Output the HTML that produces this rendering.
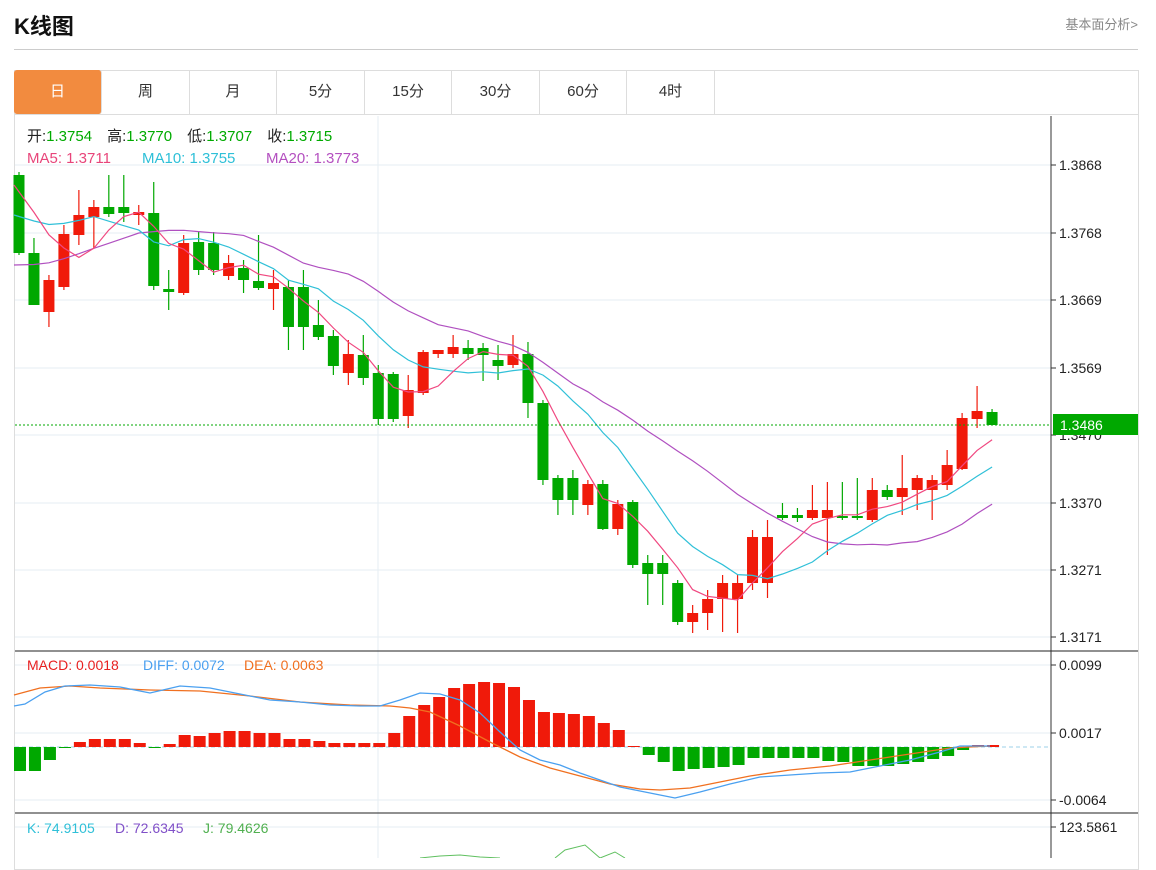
<!DOCTYPE html>
<html><head><meta charset="utf-8"><style>
*{margin:0;padding:0;box-sizing:border-box}
body{width:1156px;height:858px;overflow:hidden;background:#fff;font-family:"Liberation Sans","Noto Sans CJK SC",sans-serif;position:relative}
.t{position:absolute;left:14px;top:9px;font-size:22px;font-weight:bold;color:#111}
.r{position:absolute;right:18px;top:14px;font-size:13px;color:#888}
.hl{position:absolute;left:14px;top:49px;width:1124px;height:1px;background:#ccc}
.frame{position:absolute;left:14px;top:70px;width:1125px;height:800px;border:1px solid #ddd}
.tabs{position:absolute;left:14px;top:70px;height:45px;width:1125px;border-bottom:1px solid #ddd}
.tab{position:absolute;top:0;height:44px;line-height:44px;text-align:center;font-size:15px;color:#333;border-right:1px solid #ddd}
.tab.a{background:#f28b3f;color:#fff;border-radius:3px}
svg{position:absolute;left:0;top:0}
</style></head><body>
<div class="t">K线图</div><div class="r">基本面分析&gt;</div><div class="hl"></div>
<div class="frame"></div>
<div class="tabs">
<div class="tab a" style="left:0;width:88px">日</div>
<div class="tab" style="left:88px;width:88px">周</div>
<div class="tab" style="left:176px;width:87px">月</div>
<div class="tab" style="left:263px;width:88px">5分</div>
<div class="tab" style="left:351px;width:87px">15分</div>
<div class="tab" style="left:438px;width:88px">30分</div>
<div class="tab" style="left:526px;width:87px">60分</div>
<div class="tab" style="left:613px;width:88px">4时</div>
</div>
<svg id="s" width="1156" height="858" font-family="Liberation Sans, Noto Sans CJK SC, sans-serif"></svg>
<script>
var s=document.getElementById('s'),h='';
function L(x1,y1,x2,y2,c,w,d){h+='<line x1="'+x1+'" y1="'+y1+'" x2="'+x2+'" y2="'+y2+'" stroke="'+c+'" stroke-width="'+(w||1)+'"'+(d?' stroke-dasharray="'+d+'"':'')+'/>';}
function T(x,y,t,c,sz){h+='<text x="'+x+'" y="'+y+'" fill="'+c+'" font-size="'+(sz||14)+'">'+t+'</text>';}
function X(i){return 19+i*14.97;}
[165,233,300,368,435,503,570,637,665,733,800,827].forEach(function(y){L(15,y,1051,y,'#e6edf3',1)});
L(378,116,378,858,'#e6edf3',1);
L(1051,116,1051,858,'#333',1);
L(15,651,1138,651,'#222',1);L(15,813,1138,813,'#222',1);
[['1.3868',165],['1.3768',233],['1.3669',300],['1.3569',368],['1.3470',435],['1.3370',503],['1.3271',570],['1.3171',637],['0.0099',665],['0.0017',733],['-0.0064',800],['123.5861',827]].forEach(function(a){L(1051,a[1],1056,a[1],'#333');T(1059,a[1]+5,a[0],'#222',14)});
var C=[[175,253,172,255,0],[253,305,238,305,0],[280,312,275,327,1],[234,287,225,290,1],[215,235,190,245,1],[207,217,200,248,1],[207,214,175,217,0],[207,213,175,222,0],[212,215,205,225,1],[213,286,182,290,0],[289,292,270,310,0],[243,293,235,295,1],[242,270,232,275,0],[243,270,232,275,0],[263,276,255,280,1],[268,280,260,293,0],[281,288,235,290,0],[283,289,270,310,1],[287,327,280,350,0],[287,327,270,350,0],[325,337,300,340,0],[336,366,330,375,0],[354,373,340,385,1],[355,378,335,385,0],[373,419,365,425,0],[374,419,372,422,0],[390,416,375,428,1],[352,393,350,395,1],[350,354,350,358,1],[347,354,335,358,1],[348,354,340,360,0],[348,355,343,381,0],[360,366,345,380,0],[354,365,335,368,1],[354,403,342,418,0],[403,480,400,485,0],[478,500,475,515,0],[478,500,470,515,0],[484,505,480,515,1],[484,529,480,530,0],[504,529,500,535,1],[502,565,500,568,0],[563,574,555,605,0],[563,574,555,605,0],[583,622,580,625,0],[613,622,605,633,1],[599,613,590,630,1],[583,599,575,632,1],[583,599,575,633,1],[537,583,530,590,1],[537,583,520,598,1],[515,518,503,520,0],[515,518,508,522,0],[510,518,485,520,1],[510,518,482,555,1],[516,518,482,520,0],[516,518,478,520,0],[490,520,478,522,1],[490,497,485,500,0],[488,497,455,515,1],[478,490,475,510,1],[480,490,475,520,1],[465,485,450,490,1],[418,469,413,470,1],[411,419,386,428,1],[412,425,409,425,0]];
var cl=[];
C.forEach(function(c,i){var x=X(i),col=c[4]?'#f01a0a':'#00a800';L(x,c[2],x,c[3],col,1.2);h+='<rect x="'+(x-5.5)+'" y="'+c[0]+'" width="11" height="'+Math.max(1.5,c[1]-c[0])+'" fill="'+col+'"/>';cl.push(c[4]?c[0]:c[1]);});
var seeds=[315,315,315,315,315,315,315,315,315,315,245,245,245,245,245,168,168,168,168];
var clx=seeds.concat(cl),off=19;
function ma2(n,col){var p=[];for(var i=off;i<clx.length;i++){var sm=0;for(var j=i-n+1;j<=i;j++)sm+=clx[j];var x=X(i-off);if(i==off)x=14;p.push(x.toFixed(1)+','+(sm/n).toFixed(1));}h+='<polyline points="'+p.join(' ')+'" fill="none" stroke="'+col+'" stroke-width="1.2"/>';}
ma2(20,'#b050c0');ma2(10,'#30c0d8');ma2(5,'#f04880');
L(15,425,1051,425,'#00a800',1,'2,2');
h+='<rect x="1053" y="414" width="85" height="21" fill="#00a800"/>';T(1060,430,'1.3486','#fff',14);
T(27,141,'开:<tspan fill="#0a0">1.3754</tspan>　高:<tspan fill="#0a0">1.3770</tspan>　低:<tspan fill="#0a0">1.3707</tspan>　收:<tspan fill="#0a0">1.3715</tspan>','#222',15);
T(27,163,'MA5: 1.3711','#e8457a',15);T(142,163,'MA10: 1.3755','#2ec0d8',15);T(266,163,'MA20: 1.3773','#b450c0',15);
L(15,747,1051,747,'#9dd0e8',1,'4,3');
var M=[771,771,760,-748,742,739,739,739,743,-748,744,735,736,733,731,731,733,733,739,739,741,743,743,743,743,733,716,705,697,688,684,682,683,687,700,712,713,714,716,723,730,746,755,762,771,769,768,767,765,758,758,758,758,758,761,762,766,766,766,764,762,759,756,750,745,745];
M.forEach(function(v,i){var x=X(i)-5,col,y,hh;if(i<3||(i>=42&&i<64)){col='#00a800';y=747;hh=v-747;}else if(v<0){col='#00a800';y=747;hh=-v-747;}else{col='#f01a0a';y=v;hh=747-v;}h+='<rect x="'+x+'" y="'+y+'" width="12" height="'+Math.max(1,hh)+'" fill="'+col+'"/>';});
h+='<polyline fill="none" stroke="#f07020" stroke-width="1.3" points="14,695 40,688 70,686 100,688 150,690 200,691 250,696 300,702 350,705 390,706 410,708 430,712 460,726 490,742 520,757 550,768 580,776 610,784 640,789 660,790 690,788 720,782 750,776 790,770 830,766 870,760 910,754 950,748 990,746"/>';
h+='<polyline fill="none" stroke="#4aa0f0" stroke-width="1.3" points="14,706 25,704 45,692 65,686 90,685 120,687 150,693 180,686 210,688 240,694 270,700 300,702 330,705 360,706 380,706 400,700 420,693 440,694 460,700 480,713 500,732 520,750 540,760 560,765 580,773 600,780 620,787 640,791 660,795 675,798 700,792 730,784 760,777 790,775 820,773 850,772 880,766 910,760 940,752 960,746 990,746"/>';
T(27,670,'MACD: 0.0018','#e82020',14);T(143,670,'DIFF: 0.0072','#4aa0f0',14);T(244,670,'DEA: 0.0063','#f07020',14);
T(27,833,'K: 74.9105','#30c0d8',14);T(115,833,'D: 72.6345','#8050c8',14);T(203,833,'J: 79.4626','#50b050',14);
h+='<polyline fill="none" stroke="#60c060" stroke-width="1" points="420,858 440,856 460,855 480,857 500,858"/><polyline fill="none" stroke="#60c060" stroke-width="1" points="555,858 565,850 585,845 600,858 615,852 625,858"/>';
s.innerHTML=h;
</script>
</body></html>
